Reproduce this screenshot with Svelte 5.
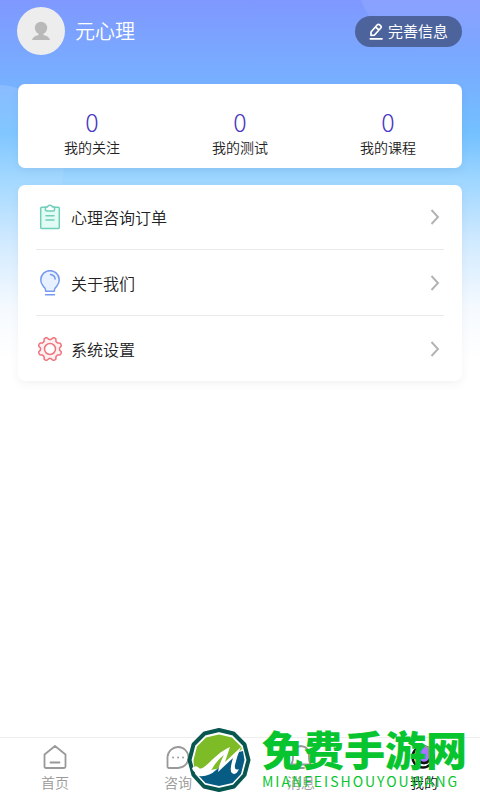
<script>
  const stats = [
    { label: '我的关注', value: 0 },
    { label: '我的测试', value: 0 },
    { label: '我的课程', value: 0 },
  ];
  const menu = [
    { label: '心理咨询订单', icon: 'orders' },
    { label: '关于我们', icon: 'about' },
    { label: '系统设置', icon: 'settings' },
  ];
  const tabs = [
    { label: '首页', icon: 'home' },
    { label: '咨询', icon: 'chat' },
    { label: '消息', icon: 'bell' },
    { label: '我的', icon: 'me', active: true },
  ];

  // Eight soft teeth round the centre of a 26-unit box.
  const gear = 'M' + Array.from({ length: 96 }, (_, i) => {
    const a = (i / 96) * Math.PI * 2;
    const r = 10.7 + 1.2 * Math.tanh(-2.2 * Math.cos(8 * a));
    return `${(13 + r * Math.cos(a)).toFixed(2)} ${(13 + r * Math.sin(a)).toFixed(2)}`;
  }).join('L') + 'Z';
</script>

<div class="page">
  <svg class="glow" viewBox="0 0 480 360" preserveAspectRatio="none" aria-hidden="true">
    <defs>
      <linearGradient id="fade" x1="0" y1="0" x2="0" y2="1"><stop offset="0" stop-color="#fff" stop-opacity=".09" /><stop offset="1" stop-color="#fff" stop-opacity="0" /></linearGradient>
      <linearGradient id="haze" x1="0" y1="0" x2="0" y2="1"><stop offset="0" stop-color="#fff" stop-opacity=".14" /><stop offset="1" stop-color="#fff" stop-opacity="0" /></linearGradient>
    </defs>
    <path d="M361 0Q376 42 440 53Q462 56 480 54V0Z" fill="url(#fade)" />
    <path d="M0 85C38 86 65 125 64 165Q62 205 38 235L0 250Z" fill="url(#haze)" />
  </svg>

  <header>
    <div class="avatar">
      <svg width="20" height="20" viewBox="0 0 20 20" fill="#b9b9b9"><circle cx="10" cy="7" r="6.2" /><path d="M7.5 11h5v3Q18 15 19 19H1Q2 15 7.5 14Z" /></svg>
    </div>
    <h1>元心理</h1>
    <button class="edit">
      <svg width="15" height="17" viewBox="0 0 15 17" fill="none" stroke="#fff" stroke-width="1.7" stroke-linejoin="round" stroke-linecap="round"><path d="M2 12.400V9L8.300 1.800Q9.300.8 10.400 1.700L11.700 2.900Q12.700 3.900 11.800 5L5.300 12.200ZM7 4.300L10 7M1.300 15.800H13" /></svg>
      完善信息
    </button>
  </header>

  <main>
    <section class="card stats">
      {#each stats as s}
        <a href="#stats"><strong>{s.value}</strong><span>{s.label}</span></a>
      {/each}
    </section>

    <nav class="card menu" aria-label="菜单">
      {#each menu as m}
        <a href="#{m.icon}">
          <svg class="symbol" width="26" height="26" viewBox="0 0 26 26" fill="none" stroke-width="1.5" stroke-linecap="round" stroke-linejoin="round">
            {#if m.icon === 'orders'}
              <g stroke="#70ceb9"><rect x="3.700" y="3.200" width="18.600" height="21.300" rx="1" fill="#e3fbf5" /><path d="M8.500 3V6Q8.500 7 9.500 7H16.500Q17.500 7 17.500 6V3H15.500Q15 1.200 13 1.200T10.500 3Z" fill="#fff" /><path d="M9 11.800H17M9 16H17" /></g>
            {:else if m.icon === 'about'}
              <g stroke="#7799ef"><path d="M8.700 21.200Q8.700 18 6 15.800A9.200 9.200 0 1 1 20 15.800Q17.300 18 17.300 21.200Z" fill="#e7f1ff" /><path d="M13.500 4.500Q17.500 5 18.200 9M8.500 24.700H17.500" /></g>
            {:else}
              <g stroke="#f0737c"><path d={gear} fill="#fff0f1" /><circle cx="13" cy="13" r="5.500" fill="#fff" /></g>
            {/if}
          </svg>
          <span>{m.label}</span>
          <svg class="arrow" width="10" height="16" viewBox="0 0 10 16" fill="none" stroke="#b2b2b2" stroke-width="1.900"><path d="M1.500 1L8 8L1.500 15" /></svg>
        </a>
      {/each}
    </nav>
  </main>

  <nav class="tabs" aria-label="主导航">
    {#each tabs as t}
      <a href="#{t.icon}" class:active={t.active}>
        <svg width="26" height="26" viewBox="0 0 26 26" fill="none" stroke="#999" stroke-width="1.800" stroke-linejoin="round" stroke-linecap="round">
          {#if t.icon === 'home'}
            <path d="M2.500 10.500L13 2L23.500 10.500V22.500Q23.500 24 22 24H4Q2.500 24 2.500 22.500ZM8.500 18.500H17.500" />
          {:else if t.icon === 'chat'}
            <path d="M2.500 13A10.500 10.500 0 1 1 13 24H4Q2.500 24 2.500 22.500ZM8 13.500H8.100M13 13.500H13.100M18 13.500H18.100" />
          {:else if t.icon === 'bell'}
            <path d="M3 20.500Q5 18 5 14V11Q5 3 13 2Q21 3 21 11V14Q21 18 23 20.500ZM10 24H16" />
          {:else}
            <circle cx="12" cy="13" r="10.500" fill="#fff" stroke="#111" stroke-width="2.500" /><circle cx="13" cy="11" r="8.500" fill="#ad72ff" /><path d="M7 15Q9 19 13 19T19 15" stroke="#111" stroke-width="2.500" />
          {/if}
        </svg>
        <span>{t.label}</span>
      </a>
    {/each}
  </nav>

  <div class="watermark">
    <svg width="64" height="64" viewBox="0 0 64 64">
      <path d="M32 2L46.500 5.500L57.500 16.500L61.500 32L57.500 47L47 58.500L32 62L17 58.500L6.500 47L2.500 32L6.500 16.500L17.500 5.500Z" fill="#fff" stroke="#07564f" stroke-width="4" stroke-linejoin="round" />
      <path d="M32 6.500L45 9.500L54 18.500L55 21L34 40L14 44L7 39L6.500 32L10 18.500L19 9.500Z" fill="#7dbb27" />
      <path d="M56 23L57.500 32L54 46L45.500 55L32 58L18.500 55L12 48Q22 49 29 42L52 24Z" fill="#075c83" />
      <path d="M5 40Q8 37 11 39Q13 42 17 39C23 35 31 24 43 19L38 34L54 19Q50 28 48 37Q47 43 52 41Q49 48 45 45Q42 43 46 30L31 44Q32 36 37 27Q30 32 25 41Q19 49 11 46Q6 44 5 40Z" fill="#fff" />
    </svg>
    <div class="words"><b>免费手游网</b><span>MIANFEISHOUYOUWANG</span></div>
  </div>
</div>

<style>
  :global(body) { margin: 0; }
  .page {
    position: relative;
    display: flex;
    flex-direction: column;
    min-height: 100vh;
    box-sizing: border-box;
    font-family: "Noto Sans CJK SC", sans-serif;
    font-weight: 350;
    color: #222;
    background: linear-gradient(#7f98ff 0, #77b0ff 82px, #73c1ff 134px, #9ed6ff 180px, #d3ebff 245px, #f6faff 310px, #fff 360px);
  }
  a { color: inherit; text-decoration: none; }
  .glow { position: absolute; inset: 0 0 auto; width: 100%; height: 360px; }
  header {
    position: relative;
    display: flex;
    align-items: center;
    gap: 10px;
    padding: 7px 18px 0 17px;
  }
  .avatar {
    display: grid;
    place-items: center;
    width: 48px;
    height: 48px;
    border-radius: 50%;
    background: #ededed;
  }
  h1 { margin: 0; font-size: 20px; line-height: 28px; font-weight: 350; color: #fff; }
  .edit {
    display: flex;
    align-items: center;
    gap: 4px;
    height: 31px;
    margin-left: auto;
    padding: 0 14px;
    border: 0;
    border-radius: 16px;
    background: #4d639c;
    color: #fff;
    font: 400 15px/20px "Noto Sans CJK SC", sans-serif;
  }
  main {
    position: relative;
    flex: 1;
    display: flex;
    flex-direction: column;
    gap: 17px;
    padding: 29px 18px;
  }
  .card { border-radius: 7px; background: #fff; box-shadow: 0 3px 10px rgba(0, 0, 0, .05); }
  .stats { display: flex; padding: 22px 0 9px; }
  .stats a { flex: 1; display: flex; flex-direction: column; align-items: center; }
  strong { font-size: 25px; line-height: 30px; font-weight: 300; color: #4936c4; }
  .stats span { font-size: 14px; line-height: 23px; }
  .menu { padding: 0 18px; }
  .menu a { display: flex; align-items: center; height: 64px; }
  .menu a + a { height: 65px; border-top: 1px solid #e9e9ec; }
  .menu span { flex: 1; font-size: 16px; line-height: 24px; margin-left: 8px; }
  .symbol { margin-left: 1px; }
  .arrow { margin-right: 4px; }
  .tabs {
    display: flex;
    justify-content: space-between;
    padding: 6px 26px 6px 25px;
    border-top: 1px solid #eee;
    background: #fff;
  }
  .tabs a {
    display: flex;
    flex-direction: column;
    align-items: center;
    width: 60px;
    font-size: 14px;
    line-height: 24px;
    color: #999;
  }
  .tabs .active { color: #111; }
  .watermark {
    position: absolute;
    right: 13px;
    bottom: 7px;
    display: flex;
    align-items: center;
    gap: 11px;
    color: #08c52f;
    pointer-events: none;
  }
  .words { display: flex; flex-direction: column; }
  .words b { font-size: 41px; line-height: 42px; font-weight: 900; }
  .words span { font: 400 14px/24px "Noto Sans CJK SC", sans-serif; letter-spacing: 2px; }
</style>
